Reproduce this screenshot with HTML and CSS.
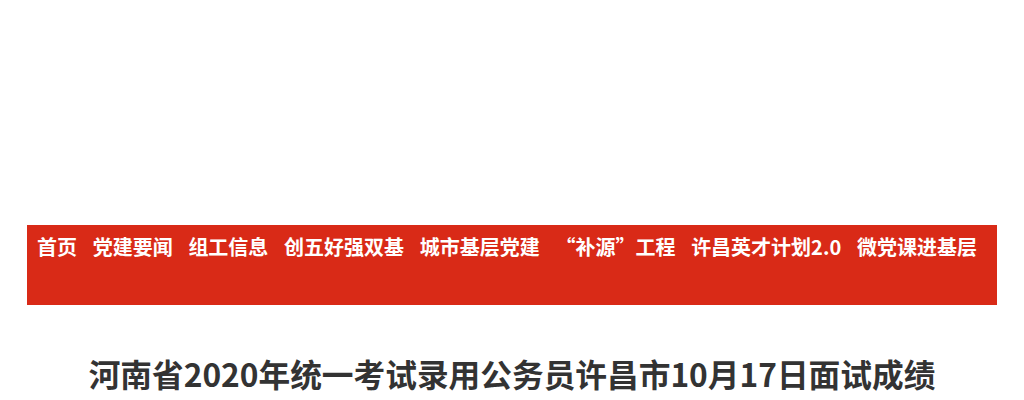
FILE: index.html
```html
<!DOCTYPE html>
<html lang="zh-CN">
<head>
<meta charset="utf-8">
<title>河南省2020年统一考试录用公务员许昌市10月17日面试成绩</title>
<link rel="stylesheet" href="styles.css">
</head>
<body>
<div class="top"></div>
<nav class="nav">
  <a class="item">首页</a>
  <a class="item">党建要闻</a>
  <a class="item">组工信息</a>
  <a class="item">创五好强双基</a>
  <a class="item">城市基层党建</a>
  <a class="item">“补源”工程</a>
  <a class="item">许昌英才计划2.0</a>
  <a class="item">微党课进基层</a>
</nav>
<h1 class="title">河南省2020年统一考试录用公务员许昌市10月17日面试成绩</h1>
</body>
</html>
```
FILE: styles.css
```css
html, body {
  margin: 0;
  padding: 0;
  background: #fff;
}
body {
  font-family: "Noto Sans CJK SC", "Noto Sans", sans-serif;
}
.top {
  height: 225px;
}
.nav {
  margin: 0 27px;
  height: 80px;
  background: #d92a17;
  box-sizing: border-box;
  padding: 7px 10px 0;
  display: flex;
  gap: 15.7px;
  align-items: flex-start;
}
.item {
  color: #fff;
  font-size: 20px;
  font-weight: bold;
  line-height: 30px;
  white-space: nowrap;
}
.title {
  margin: 46px 0 0;
  text-align: center;
  font-size: 31.7px;
  font-weight: bold;
  color: #333;
  line-height: 44px;
}
```
